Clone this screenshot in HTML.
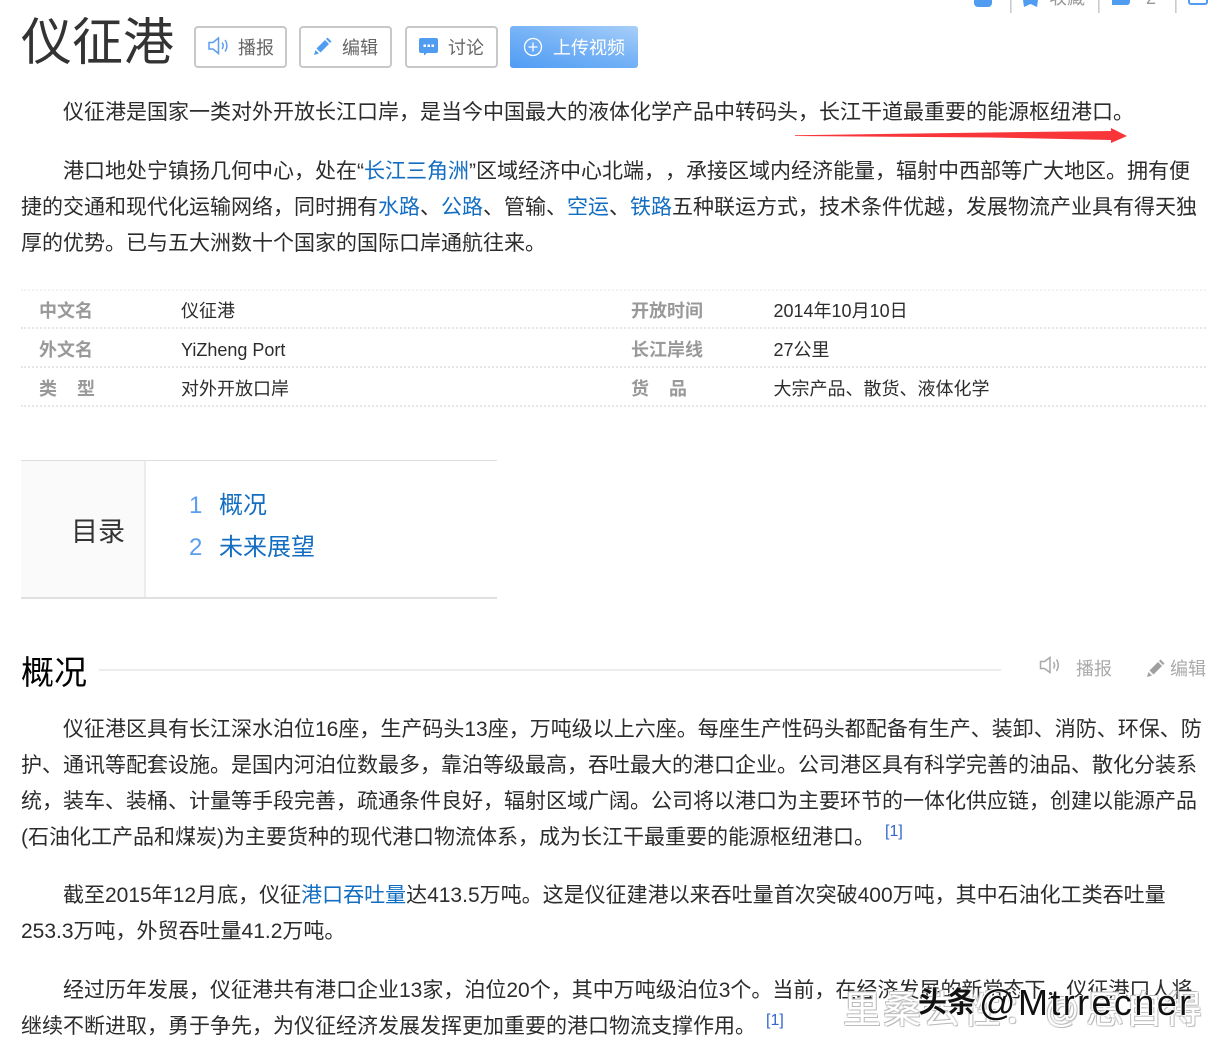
<!DOCTYPE html>
<html lang="zh"><head><meta charset="utf-8"><title>仪征港</title>
<style>
html,body{margin:0;padding:0;background:#fff}
body{position:relative;width:1216px;height:1047px;overflow:hidden;font-family:"Liberation Sans","Noto Sans CJK SC",sans-serif;color:#333;text-spacing-trim:space-all}
.l{position:absolute;left:21px;white-space:nowrap;font-size:21px;line-height:36px;color:#2c2c2c}
.i{left:63px}
a{color:#136ec2;text-decoration:none}
.abs{position:absolute;white-space:nowrap}
.btn{position:absolute;top:26px;height:38px;width:89px;border:2px solid #c8c8c8;border-radius:4px;background:#fff}
.btn span{position:absolute;top:1px;line-height:38px;font-size:18px;color:#666;white-space:nowrap}
.btn svg{position:absolute}
.k{position:absolute;font-size:18px;font-weight:bold;color:#999;line-height:24px;white-space:nowrap}
.v{position:absolute;font-size:18px;color:#2c2c2c;line-height:24px;white-space:nowrap}
.d{position:absolute;left:21px;width:1185px;height:0;border-top:2px dotted #e6e6e6}
sup{position:absolute;font-size:16px;line-height:20px;color:#3366cc}
.wm{position:absolute;white-space:nowrap;color:#fff;font-size:38px;line-height:46px;text-shadow:-1px -1px 0 #bbb,1px 1px 0 #bbb,1px -1px 0 #ddd,-1px 1px 0 #ddd}
.wk{position:absolute;white-space:nowrap;color:#111;text-shadow:1px 1px 0 #fff,-1px -1px 0 #fff}
</style></head><body>

<!-- top cut-off toolbar -->
<svg class="abs" style="left:970px;top:0" width="246" height="14" viewBox="0 0 246 14">
<path d="M4 0h18v3a4 4 0 0 1-4 4H8a4 4 0 0 1-4-4z" fill="#4f9cf0"/>
<rect x="40" y="0" width="1.6" height="13" fill="#c8ccd0"/>
<path d="M53 0h15l-1 7-6.500-3-6.500 3z" fill="#4f9cf0"/>
<rect x="128" y="0" width="1.600" height="13" fill="#c8ccd0"/>
<path d="M142 0h18v2a3 3 0 0 1-3 3h-15z" fill="#4f9cf0"/>
<rect x="205" y="0" width="1.600" height="13" fill="#c8ccd0"/>
<path d="M219 0v2a2 2 0 0 0 2 2h14a2 2 0 0 0 2-2V0" fill="none" stroke="#4f9cf0" stroke-width="2"/>
</svg>
<div class="abs" style="left:1049px;top:-13px;font-size:18px;line-height:22px;color:#999">收藏</div>
<div class="abs" style="left:1146px;top:-13px;font-size:18px;line-height:22px;color:#999">2</div>

<!-- title -->
<div class="abs" style="left:21px;top:6px;font-size:51px;line-height:74px;color:#333">仪征港</div>

<div class="btn" style="left:194px">
<svg style="left:11px;top:8px" width="24" height="20" viewBox="0 0 24 20" fill="none" stroke="#5a9eee" stroke-width="1.500"><path d="M2 6.500h4L11.500 2v15.500L6 13H2z"/><path d="M15 6.500c1.500 2 1.500 4.500 0 6.500M18 4c2.500 3.500 2.500 8 0 11.500"/></svg>
<span style="left:42px">播报</span></div>

<div class="btn" style="left:299px">
<svg style="left:12px;top:9px" width="20" height="20" viewBox="0 0 20 20" fill="#4f9cf0"><path d="M1 18l1.500-5 3.500 3.500zM3.500 11.500L12 3l4 4-8.500 8.500zM13 2l1.500-1.500 4 4L17 6z"/></svg>
<span style="left:41px">编辑</span></div>

<div class="btn" style="left:405px">
<svg style="left:11px;top:8px" width="22" height="22" viewBox="0 0 22 22"><path d="M3 2h15a2 2 0 0 1 2 2v11a2 2 0 0 1-2 2H9l-3 2.500V17H3a2 2 0 0 1-2-2V4a2 2 0 0 1 2-2z" fill="#4f9cf0"/><rect x="5.500" y="8.500" width="2.500" height="2.500" fill="#fff"/><rect x="9.500" y="8.500" width="2.500" height="2.500" fill="#fff"/><rect x="13.500" y="8.500" width="2.500" height="2.500" fill="#fff"/></svg>
<span style="left:41px">讨论</span></div>

<div class="abs" style="left:510px;top:26px;width:128px;height:42px;border-radius:3px;background:linear-gradient(15deg,#4f9cf4 0%,#79b4f6 55%,#a8cff9 100%)">
<svg style="position:absolute;left:13px;top:11px" width="20" height="20" viewBox="0 0 20 20" fill="none" stroke="#fff" stroke-width="1.300"><circle cx="10" cy="10" r="8.500"/><path d="M10 5.500v9M5.500 10h9"/></svg>
<span style="position:absolute;left:43px;top:1px;line-height:42px;font-size:18px;color:#fff;white-space:nowrap">上传视频</span></div>

<!-- intro -->
<div class="l i" style="top:95px">仪征港是国家一类对外开放长江口岸，是当今中国最大的液体化学产品中转码头，长江干道最重要的能源枢纽港口。</div>

<svg class="abs" style="left:790px;top:124px" width="345" height="24" viewBox="0 0 345 24"><path d="M5 11.200L200 8.500l121-1.500V4l16 8-16 7v-3l-120-2.500L5 12z" fill="#f8363a"/></svg>

<div class="l i" style="top:154px">港口地处宁镇扬几何中心，处在“<a href="#">长江三角洲</a>”区域经济中心北端，，承接区域内经济能量，辐射中西部等广大地区。拥有便</div>
<div class="l" style="top:190px">捷的交通和现代化运输网络，同时拥有<a href="#">水路</a>、<a href="#">公路</a>、管输、<a href="#">空运</a>、<a href="#">铁路</a>五种联运方式，技术条件优越，发展物流产业具有得天独</div>
<div class="l" style="top:226px">厚的优势。已与五大洲数十个国家的国际口岸通航往来。</div>

<!-- basic info -->
<div class="d" style="top:289px;border-top-color:#f3f3f3"></div>
<div class="k" style="left:39px;top:299px">中文名</div><div class="v" style="left:181px;top:299px">仪征港</div>
<div class="k" style="left:631px;top:299px">开放时间</div><div class="v" style="left:773.500px;top:299px">2014年10月10日</div>
<div class="d" style="top:327px"></div>
<div class="k" style="left:39px;top:338px">外文名</div><div class="v" style="left:181px;top:338px">YiZheng Port</div>
<div class="k" style="left:631px;top:338px">长江岸线</div><div class="v" style="left:773.500px;top:338px">27公里</div>
<div class="d" style="top:366px"></div>
<div class="k" style="left:39px;top:377px">类</div><div class="k" style="left:77px;top:377px">型</div><div class="v" style="left:181px;top:377px">对外开放口岸</div>
<div class="k" style="left:631px;top:377px">货</div><div class="k" style="left:669px;top:377px">品</div><div class="v" style="left:773.500px;top:377px">大宗产品、散货、液体化学</div>
<div class="d" style="top:405px"></div>

<!-- toc -->
<div class="abs" style="left:21px;top:460px;width:476px;height:1px;background:#dedede"></div>
<div class="abs" style="left:21px;top:461px;width:123px;height:136px;background:#fafafa;border-right:2px solid #ececec"></div>
<div class="abs" style="left:21px;top:597px;width:476px;height:2px;background:#e0e0e0"></div>
<div class="abs" style="left:71px;top:513px;font-size:27px;line-height:38px;color:#333">目录</div>
<div class="abs" style="left:189px;top:489px;font-size:24px;line-height:34px;color:#5a9eee">1</div>
<div class="abs" style="left:219px;top:489px;font-size:24px;line-height:34px;color:#136ec2">概况</div>
<div class="abs" style="left:189px;top:531px;font-size:24px;line-height:34px;color:#5a9eee">2</div>
<div class="abs" style="left:219px;top:531px;font-size:24px;line-height:34px;color:#136ec2">未来展望</div>

<!-- section head -->
<div class="abs" style="left:21px;top:651px;font-size:33px;line-height:44px;color:#000">概况</div>
<div class="abs" style="left:99px;top:669px;width:902px;height:2px;background:#ececec"></div>
<svg class="abs" style="left:1039px;top:656px" width="24" height="20" viewBox="0 0 24 20" fill="none" stroke="#a8a8a8" stroke-width="1.500"><path d="M1.500 5.500h4L11 1.500v15L5.500 12.500h-4z"/><path d="M14.500 6c1.300 2 1.300 4.500 0 6.500M17.500 3.500c2.300 3.500 2.300 8 0 11.500"/></svg>
<div class="abs" style="left:1076px;top:656px;font-size:18px;line-height:26px;color:#aaa">播报</div>
<svg class="abs" style="left:1146px;top:658px" width="20" height="20" viewBox="0 0 20 20" fill="#a0a0a0"><path d="M1 19l1.500-5 3.500 3.500zM3.500 12.500L12 4l4 4-8.500 8.500zM13 3l1.500-1.500 4 4L17 7z"/></svg>
<div class="abs" style="left:1170px;top:656px;font-size:18px;line-height:26px;color:#aaa">编辑</div>

<!-- body -->
<div class="l i" style="top:712px">仪征港区具有长江深水泊位16座，生产码头13座，万吨级以上六座。每座生产性码头都配备有生产、装卸、消防、环保、防</div>
<div class="l" style="top:748px">护、通讯等配套设施。是国内河泊位数最多，靠泊等级最高，吞吐最大的港口企业。公司港区具有科学完善的油品、散化分装系</div>
<div class="l" style="top:784px">统，装车、装桶、计量等手段完善，疏通条件良好，辐射区域广阔。公司将以港口为主要环节的一体化供应链，创建以能源产品</div>
<div class="l" style="top:820px">(石油化工产品和煤炭)为主要货种的现代港口物流体系，成为长江干最重要的能源枢纽港口。</div>
<sup style="left:885px;top:822px">[1]</sup>

<div class="l i" style="top:878px">截至2015年12月底，仪征<a href="#">港口吞吐量</a>达413.5万吨。这是仪征建港以来吞吐量首次突破400万吨，其中石油化工类吞吐量</div>
<div class="l" style="top:914px">253.3万吨，外贸吞吐量41.2万吨。</div>

<div class="l i" style="top:973px">经过历年发展，仪征港共有港口企业13家，泊位20个，其中万吨级泊位3个。当前，在经济发展的新常态下，仪征港口人将</div>
<div class="l" style="top:1009px">继续不断进取，勇于争先，为仪征经济发展发挥更加重要的港口物流支撑作用。</div>
<sup style="left:766px;top:1011px">[1]</sup>

<!-- watermarks -->
<div class="wm" style="left:843px;top:988px;letter-spacing:2px">里桑去性：</div>
<div class="wm" style="left:1045px;top:988px;font-size:34px">@</div>
<div class="wm" style="left:1086px;top:988px;letter-spacing:1px">思自得</div>
<div class="wk" style="left:918px;top:981px;font-size:29px;line-height:44px;font-weight:bold">头条</div>
<div class="wk" style="left:979px;top:981px;font-size:36px;line-height:44px;letter-spacing:2.400px">@Mtrrecner</div>

</body></html>
